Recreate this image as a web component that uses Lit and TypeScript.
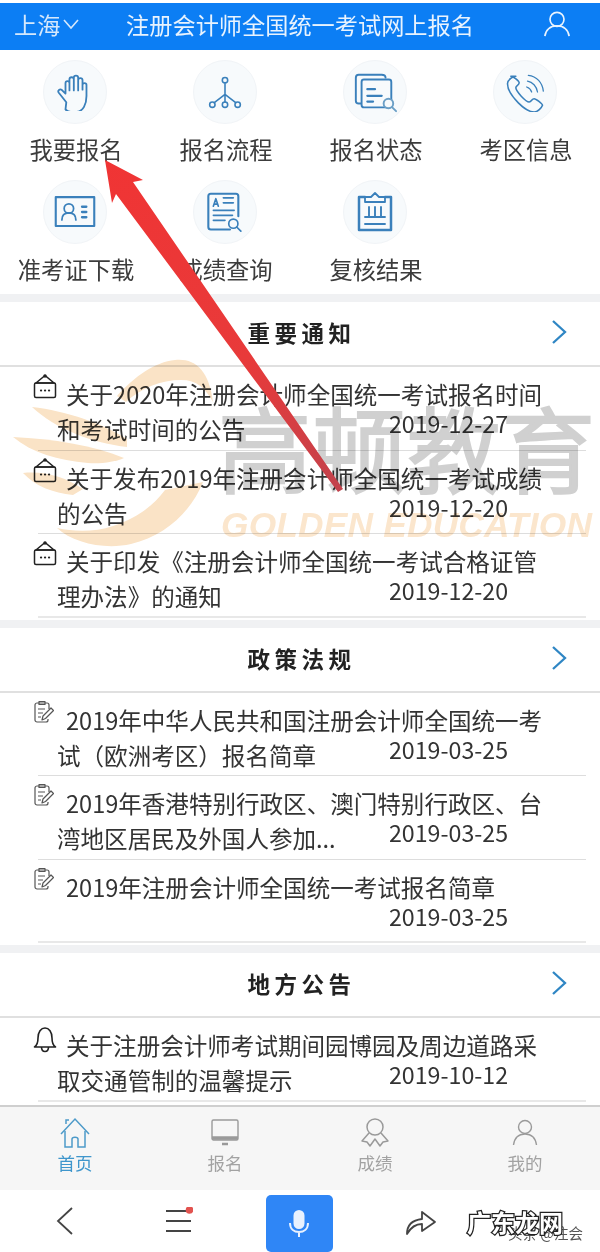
import { LitElement, html, css, svg } from "lit";
import { customElement } from "lit/decorators.js";

const B = "#3a80bb";
const ic = (body: unknown, s = 48) => html`<svg width=${s} height=${s} viewBox="0 0 48 48" fill="none" stroke=${B} stroke-width="2" stroke-linecap="round" stroke-linejoin="round">${body}</svg>`;

const icons: Record<string, unknown> = {
  hand: svg`<path d="M13 37L3.500 25c-2-3 1.500-5.500 4-3.500L12 26V13c0-3.500 5-3.500 5 0v9-14c0-3.500 5.500-3.500 5.500 0v14-16c0-3.500 5.500-3.500 5.500 0v16-13c0-3.500 5.500-3.500 5.500 0v12-6c0-3 5-3 5 0v14c0 10-4 20-13 20h-7c-3 0-5-1-6.500-3z" stroke-width="2.300"/>`,
  flow: svg`<circle cx="24" cy="9" r="3.400"/><circle cx="8" cy="40" r="3.400"/><circle cx="24" cy="40" r="3.400"/><circle cx="40" cy="40" r="3.400"/><path d="M24 12.500v24M24 27L10.500 37.500M24 27l13.500 10.500"/>`,
  state: svg`<path d="M9 36H7c-2 0-3-1-3-3V9c0-2 1-3 3-3h24c2 0 4 1 4 3"/><rect x="10" y="11" width="31" height="29" rx="2.500"/><path d="M16 21h8M16 28h15M16 34h6" stroke-width="2.300"/><circle cx="38" cy="36" r="5" fill="#f7fafc" stroke="#6b9fc6"/><path d="M42 40l4 4" stroke="#6b9fc6"/>`,
  phone: svg`<path d="M13 5C10 5 3 9 3 14c0 10 8 18 13 23 5 5 13 11 19 11 4 0 9-5 10-8 0-2-8-8-10-8-3 0-3 4-6 4-4 0-16-13-16-17 0-3 4-3 4-6 0-2-7-8-10-8z" stroke-width="1.900"/><path d="M26 18c3 1 5 3 6 6M27 11c6 1 11 6 12 13M28 4c10 1 17 9 18 19" stroke-width="1.500"/>`,
  card: svg`<rect x="2" y="7" width="44" height="33" stroke-width="2.400"/><circle cx="17" cy="20" r="5.400"/><path d="M9 33c0-5 3-8 8-8s8 3 8 8"/><path d="M32 18h5M32 24h5M32 30h5" stroke-width="2.600"/>`,
  query: svg`<path d="M30 45H7c-2 0-3-1-3-3V5c0-2 1-3 3-3h30c2 0 3 1 3 3v24" stroke-width="2.500"/><path d="M10 17l3-9 3 9M11 14.500h4M22 7h12M22 13h12M10 22h25M10 28h23M10 34h14"/><circle cx="34" cy="38" r="5.500"/><path d="M38 42l5 5"/>`,
  clip: svg`<path d="M14 9H8v33h32V9h-6" stroke-width="2.500"/><path d="M14 14V9h6l4-4 4 4h6v5z" stroke-width="1.800"/><path d="M18 19v9M24 19v9M30 19v9M14 29h20M14 36h20" stroke-width="1.900"/>`,
};
const sizes: Record<string, number> = { hand: 38, flow: 38, state: 46, phone: 40, card: 42, query: 40, clip: 48 };

const inbox = svg`<svg width="24" height="26" viewBox="0 0 24 26" fill="none" stroke="#222" stroke-width="1.500"><path d="M12 1.500L3 9h18z"/><rect x="1.500" y="9" width="21" height="14.500" rx="1.500"/><path d="M8 16.500h.1M12 16.500h.1M16 16.500h.1" stroke-width="2.200" stroke-linecap="round"/><circle cx="12" cy="2" r="1" fill="#222"/></svg>`;
const note = svg`<svg width="21" height="24" viewBox="0 0 21 24" fill="none" stroke="#555" stroke-width="1.200" stroke-linejoin="round"><path d="M15 19v1c0 1-1 2-2 2H4c-1 0-2-1-2-2V5c0-1 1-2 2-2h10c1 0 2 1 2 2v4"/><rect x="6" y="1.500" width="6" height="3"/><path d="M5 9h7M5 13h5M5 17h3"/><path d="M9 20l1-4 8-8 2.500 2.500-8 8z"/></svg>`;
const bell = svg`<svg width="24" height="28" viewBox="0 0 24 28" fill="none" stroke="#222" stroke-width="1.600" stroke-linejoin="round"><path d="M1.500 22c3-2 3.500-5 3.500-9 0-6 3-10 7-10s7 4 7 10c0 4 .5 7 3.500 9z"/><path d="M8.500 22c0 3 1.500 4.500 3.500 4.500s3.500-1.500 3.500-4.500"/></svg>`;

interface Item { t: string; d: string; }
const sections: { name: string; icon: unknown; items: Item[] }[] = [
  { name: "重要通知", icon: inbox, items: [
    { t: "关于2020年注册会计师全国统一考试报名时间和考试时间的公告", d: "2019-12-27" },
    { t: "关于发布2019年注册会计师全国统一考试成绩的公告", d: "2019-12-20" },
    { t: "关于印发《注册会计师全国统一考试合格证管理办法》的通知", d: "2019-12-20" },
  ]},
  { name: "政策法规", icon: note, items: [
    { t: "2019年中华人民共和国注册会计师全国统一考试（欧洲考区）报名简章", d: "2019-03-25" },
    { t: "2019年香港特别行政区、澳门特别行政区、台湾地区居民及外国人参加...", d: "2019-03-25" },
    { t: "2019年注册会计师全国统一考试报名简章", d: "2019-03-25" },
  ]},
  { name: "地方公告", icon: bell, items: [
    { t: "关于注册会计师考试期间园博园及周边道路采取交通管制的温馨提示", d: "2019-10-12" },
  ]},
];

const grid = [
  ["我要报名", "hand"], ["报名流程", "flow"], ["报名状态", "state"], ["考区信息", "phone"],
  ["准考证下载", "card"], ["成绩查询", "query"], ["复核结果", "clip"],
];

@customElement("app-root")
export class AppRoot extends LitElement {
  static styles = css`
    :host { display: block; width: 600px; height: 1252px; overflow: hidden; position: relative; background: #fff;
      font-family: "Noto Sans CJK SC", "Noto Sans", sans-serif; color: #333; }
    .page { display: flex; flex-direction: column; height: 1252px; }
    .head { margin-top: 3px; height: 47px; padding-bottom: 5px; box-sizing: border-box; background: #0c7ef4; color: #e8f3fe; display: grid; grid-template-columns: 112px 362px 1fr; align-items: center; font-size: 23.2px; flex: none; }
    .city { padding-left: 14px; display: flex; align-items: center; gap: 1px; color: #d5e8fc; }
    .title { text-align: center; padding-left: 14px; white-space: nowrap; }
    .user { display: flex; justify-content: center; padding-left: 40px; }
    .gridwrap { display: grid; grid-template-columns: repeat(4, 150px); grid-auto-rows: 120px; padding: 10px 0 4px; flex: none; height: 244px; box-sizing: border-box; }
    .cell { display: flex; flex-direction: column; align-items: center; gap: 8px; }
    .circle { width: 64px; height: 64px; border-radius: 50%; background: #f7fafc; border: 1px solid #f1f4f7; box-sizing: border-box; display: flex; align-items: center; justify-content: center; flex: none; }
    .label { font-size: 23.300px; line-height: 34px; color: #3c3c3c; white-space: nowrap; padding-left: 2px; }
    .band { height: 8px; background: #f0f1f3; flex: none; }
    .sec-head { height: 65px; padding-bottom: 3px; box-sizing: border-box; border-bottom: 2px solid #e0e0e0; display: grid; grid-template-columns: 1fr auto; align-items: center; flex: none; }
    .sec-name { grid-column: 1 / 3; grid-row: 1; text-align: center; font-size: 22.500px; font-weight: 700; letter-spacing: 4.500px; color: #222; padding-left: 3px; }
    .chev { grid-column: 2; grid-row: 1; margin-right: 32px; display: flex; }
    .list { margin: 0 14px 2px 38px; flex: none; }
    .item { height: 83.500px; box-sizing: border-box; border-bottom: 1px solid #ddd; display: grid; }
    .item:last-child { border-bottom: 2px solid #e8e8e8; }
    .item > * { grid-column: 1; grid-row: 1; }
    .ic { margin: 7px 0 0 -5px; align-self: start; justify-self: start; display: flex; }
    .txt { margin: 10px 0 0 19px; width: 486px; font-size: 23.550px; line-height: 35px; text-indent: 9px; color: #333; }
    .date { align-self: start; margin: 43px 0 0 351px; font-size: 23.200px; line-height: 27px; color: #333; }
    .tabs { height: 85px; margin-top: auto; background: #f6f6f6; border-top: 2px solid #cfcfcf; box-sizing: border-box; display: grid; grid-template-columns: repeat(4, 150px); flex: none; }
    .tab { display: flex; flex-direction: column; align-items: center; padding-top: 10px; font-size: 17.500px; color: #a2a2a2; line-height: 25px; }
    .tab svg { height: 33px; }
    .tab.on { color: #3f96cc; }
    .nav { height: 62px; display: grid; grid-template-columns: 130px 98px 142px 102px 1fr; align-items: center; flex: none; }
    .slot { display: flex; justify-content: center; }
    .mic { height: 57px; width: 67px; background: #2f86f6; border-radius: 5px; display: flex; align-items: center; justify-content: center; margin-top: 5px; }
    .wm { position: absolute; left: 0; top: 0; width: 600px; height: 1252px; pointer-events: none; mix-blend-mode: multiply; }
    .wm-cn { position: absolute; left: 218px; top: 381px; font-size: 93.500px; line-height: 130px; font-weight: 400; -webkit-text-stroke: 2px #d0d0d0; color: #d0d0d0; letter-spacing: 1px; white-space: nowrap; }
    .wm-en { position: absolute; left: 221px; top: 503px; font-family: "Liberation Sans", sans-serif; font-size: 35.300px; line-height: 44px; font-weight: 700; font-style: italic; color: #fbe6cd; white-space: nowrap; letter-spacing: .2px; }
    .wm-logo { position: absolute; left: 0; top: 350px; }
    .arrow { position: absolute; left: 0; top: 0; pointer-events: none; }
    .sub { position: absolute; left: 508px; top: 1222px; font-size: 14.500px; line-height: 22px; color: #555; white-space: nowrap; }
    .gd { position: absolute; left: 467px; top: 1204px; font-size: 24px; line-height: 36px; font-weight: 700; color: #fff; -webkit-text-stroke: 2.500px #222; paint-order: stroke fill; white-space: nowrap; }
  `;

  render() {
    return html`
      <div class="page">
        <div class="head">
          <div class="city">上海<svg width="20" height="12" viewBox="0 0 20 12" fill="none" stroke="#d5e8fc" stroke-width="1.600"><path d="M3 2l7 8 7-8"/></svg></div>
          <div class="title">注册会计师全国统一考试网上报名</div>
          <div class="user"><svg width="28" height="28" viewBox="0 0 30 30" fill="none" stroke="#eaf4fe" stroke-width="1.800"><circle cx="15" cy="10" r="7.500"/><path d="M2 28c1-7 6-11 13-11s12 4 13 11"/></svg></div>
        </div>
        <div class="gridwrap">
          ${grid.map(([l, k]) => html`<div class="cell"><div class="circle">${ic(icons[k], sizes[k])}</div><div class="label">${l}</div></div>`)}
        </div>
        ${sections.map((s) => html`
          <div class="band"></div>
          <div class="sec-head">
            <div class="sec-name">${s.name}</div>
            <div class="chev"><svg width="18" height="26" viewBox="0 0 18 26" fill="none" stroke="#2f86c4" stroke-width="2.300"><path d="M3 2l12 11L3 24"/></svg></div>
          </div>
          <div class="list">
            ${s.items.map((i) => html`<div class="item">
              <span class="ic">${s.icon}</span>
              <div class="txt">${i.t}</div>
              <div class="date">${i.d}</div>
            </div>`)}
          </div>
        `)}
        <div class="tabs">
          <div class="tab on"><svg width="30" height="33" viewBox="0 0 30 33" fill="none" stroke="#4d9ac9" stroke-width="1.500"><path d="M1 17L15 2l14 15"/><path d="M6 7V3h3"/><path d="M5 14v16h7v-8c0-2.500 6-2.500 6 0v8h7V14"/></svg>首页</div>
          <div class="tab"><svg width="28" height="33" viewBox="0 0 28 33" fill="none" stroke="#9a9a9a" stroke-width="1.400"><rect x="1" y="3" width="26" height="20" rx="1.500"/><path d="M1 21h26" stroke-width="3.500"/><path d="M11 27h6" stroke-width="2.500"/></svg>报名</div>
          <div class="tab"><svg width="30" height="33" viewBox="0 0 30 33" fill="none" stroke="#9a9a9a" stroke-width="1.500" stroke-linejoin="round"><circle cx="15" cy="10" r="8"/><path d="M9 16l-7 8 5 1 3 4 5-7 5 7 3-4 5-1-7-8"/></svg>成绩</div>
          <div class="tab"><svg width="26" height="33" viewBox="0 0 26 33" fill="none" stroke="#9a9a9a" stroke-width="1.400"><circle cx="13" cy="10" r="6.500"/><path d="M1.500 28c1-7 5-11 11.500-11s10.500 4 11.500 11"/></svg>我的</div>
        </div>
        <div class="nav">
          <div class="slot"><svg width="18" height="30" viewBox="0 0 18 30" fill="none" stroke="#444" stroke-width="1.800"><path d="M16 2L2 15l14 13"/></svg></div>
          <div class="slot"><svg width="28" height="28" viewBox="0 0 28 28" fill="none" stroke="#444" stroke-width="2"><path d="M1 4h25M1 14h25M1 24h25"/><circle cx="24.500" cy="3" r="3.800" fill="#e2534f" stroke="none"/></svg></div>
          <div class="slot"><div class="mic"><svg width="24" height="30" viewBox="0 0 24 30" fill="none" stroke="#e8f1fe" stroke-width="2"><rect x="7.500" y="2" width="9" height="17" rx="4.500" fill="#e8f1fe"/><path d="M3 14c0 6 4 9 9 9s9-3 9-9M12 23v5"/></svg></div></div>
          <div class="slot"><svg width="32" height="30" viewBox="0 0 32 30" fill="none" stroke="#444" stroke-width="1.800" stroke-linejoin="round"><path d="M2 28c0-9 6-14 15-15V6l13 10-13 9v-7c-7 0-11 3-15 10z"/></svg></div>
          <div></div>
        </div>
      </div>
      <div class="wm">
        <svg class="wm-logo" width="230" height="210" viewBox="0 350 230 210" fill="#fae3c6">
          <path d="M117 396c18-20 38-34 58-36 20-2 34 10 38 42-8-14-16-22-32-22-20 0-40 8-55 22z"/>
          <path d="M32 407c34 4 70 16 95 32v8c-34-4-72-18-95-40z"/>
          <path d="M13 437c40 2 80 8 111 21-8 4-24 6-36 5-30-3-56-10-75-26z"/>
          <path d="M23 473c22-2 42 4 60 16l-10 6c-20-2-38-9-50-22z"/>
          <path d="M57 528c18 4 38 4 56-2 24-8 40-20 52-36l38-8c-12 30-38 54-72 62-26 6-58-1-74-16z"/>
        </svg>
        <div class="wm-cn">高顿教育</div>
        <div class="wm-en">GOLDEN EDUCATION</div>
      </div>
      <svg class="arrow" width="600" height="1252" viewBox="0 0 600 1252">
        <defs><linearGradient id="ag" x1="105" y1="160" x2="341" y2="491" gradientUnits="userSpaceOnUse"><stop offset="0" stop-color="#f03434"/><stop offset=".6" stop-color="#e83a3a"/><stop offset="1" stop-color="#c2424c"/></linearGradient></defs>
        <path d="M105 160L143 180 133 182 343 489 338 492 116 194 112 203z" fill="url(#ag)"/>
      </svg>
      <div class="sub">头条 @注会</div>
      <div class="gd">广东龙网</div>
    `;
  }
}
